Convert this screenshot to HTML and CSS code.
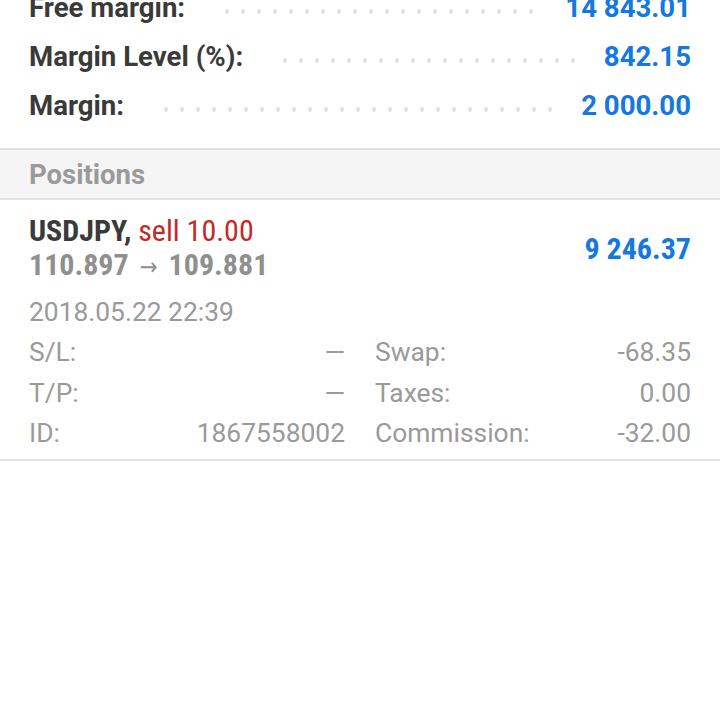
FILE: index.html
```html
<!DOCTYPE html>
<html lang="en">
<head>
  <meta charset="UTF-8" />
  <meta name="viewport" content="width=device-width, initial-scale=1.0" />
  <title>Trade</title>
  <link rel="stylesheet" href="styles.css">
</head>
<body>

<!-- SUMMARY -->
<div class="summary">
  <div class="summary-row">
    <span class="label">Free margin:</span>
    <span class="dots"></span>
    <span class="value">14 843.01</span>
  </div>
  <div class="summary-row">
    <span class="label">Margin Level (%):</span>
    <span class="dots"></span>
    <span class="value">842.15</span>
  </div>
  <div class="summary-row">
    <span class="label">Margin:</span>
    <span class="dots"></span>
    <span class="value">2 000.00</span>
  </div>
</div>

<div class="section-title">Positions</div>

<!-- POSITION -->
<div class="position">
  <div class="position-head">
    <div class="position-main">
      <div class="symbol">USDJPY, <span class="sell">sell 10.00</span></div>
      <div class="prices">110.897 <span class="arrow">→</span> 109.881</div>
    </div>
    <div class="profit">9 246.37</div>
  </div>
  <div class="date">2018.05.22 22:39</div>
  <div class="details">
    <div class="detail"><span>S/L:</span><span>—</span></div>
    <div class="detail"><span>Swap:</span><span>-68.35</span></div>
    <div class="detail"><span>T/P:</span><span>—</span></div>
    <div class="detail"><span>Taxes:</span><span>0.00</span></div>
    <div class="detail"><span>ID:</span><span>1867558002</span></div>
    <div class="detail"><span>Commission:</span><span>-32.00</span></div>
  </div>
</div>

</body>
</html>
```

FILE: styles.css
```css
*, *::before, *::after { box-sizing: border-box; margin: 0; padding: 0; }

:root {
  --text:    #3a3a3a;
  --gray:    #8f8f8f;
  --light:   #9a9a9a;
  --blue:    #1478e0;
  --red:     #c62828;
  --border:  #e2e2e2;
  --band:    #f5f5f5;
  --pad:     29px;
}

body {
  font-family: Roboto, "Noto Sans", Arial, sans-serif;
  background: #fff;
  color: var(--text);
  overflow: hidden;
}

/* ── SUMMARY ─────────────────────────────── */
.summary {
  margin-top: -17px;
  padding: 0 var(--pad) 18px;
  border-bottom: 2px solid var(--border);
}

.summary-row {
  display: flex;
  align-items: center;
  height: 49px;
  font-size: 27.6px;
  font-weight: 700;
}

.summary-row .label { color: var(--text); }

.summary-row .dots {
  flex: 1;
  height: 5px;
  margin: 8px 26px 0 34px;
  background: radial-gradient(circle, #e3e3e3 2px, transparent 2.5px) left center / 16px 5px repeat-x;
}

.summary-row .value { color: var(--blue); }

/* ── SECTION TITLE ───────────────────────── */
.section-title {
  background: var(--band);
  border-bottom: 2px solid var(--border);
  height: 50px;
  padding: 0 var(--pad);
  display: flex;
  align-items: center;
  font-size: 27.5px;
  font-weight: 700;
  color: var(--light);
}

/* ── POSITION ────────────────────────────── */
.position {
  padding: 14px var(--pad) 5px;
  border-bottom: 2px solid var(--border);
}

.position-head {
  display: flex;
  align-items: center;
  justify-content: space-between;
}

.symbol, .prices, .profit {
  font-family: "Roboto Condensed", "Liberation Sans Narrow", "DejaVu Sans Condensed", Roboto, sans-serif;
  font-size: 30px;
  font-weight: 700;
  line-height: 34px;
}

.symbol { color: var(--text); }
.symbol .sell { color: var(--red); font-weight: 400; }
.prices { color: var(--gray); }
.prices .arrow { font-weight: 400; font-size: 24px; padding: 0 4px; }
.profit { color: var(--blue); }

.date {
  margin-top: 8px;
  font-size: 26.4px;
  line-height: 40px;
  color: var(--light);
}

.details {
  display: grid;
  grid-template-columns: 1fr 1fr;
  column-gap: 30px;
  font-size: 26.4px;
  line-height: 40.5px;
  color: var(--light);
}

.detail {
  display: flex;
  justify-content: space-between;
}
```
